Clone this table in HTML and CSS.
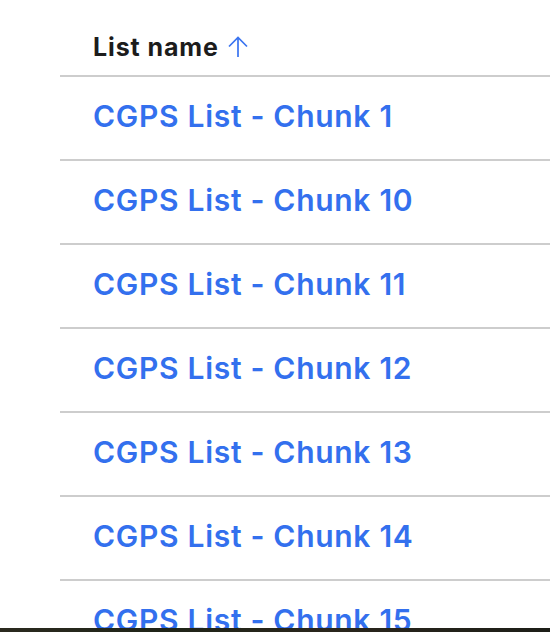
FILE: index.html
```html
<!DOCTYPE html>
<html>
<head>
<meta charset="utf-8">
<link rel="stylesheet" href="styles.css">
</head>
<body>
<div class="list">
  <div class="head">
    <span class="head-label">List name</span>
    <svg class="sort" width="20" height="22" viewBox="0 0 20 22"><path d="M10 1.5V21M1 10.5l9-9 9 9" fill="none" stroke="#3a74f0" stroke-width="1.7"/></svg>
  </div>
  <div class="row"><a class="name">CGPS List - Chunk 1</a></div>
  <div class="row"><a class="name">CGPS List - Chunk 10</a></div>
  <div class="row"><a class="name">CGPS List - Chunk 11</a></div>
  <div class="row"><a class="name">CGPS List - Chunk 12</a></div>
  <div class="row"><a class="name">CGPS List - Chunk 13</a></div>
  <div class="row"><a class="name">CGPS List - Chunk 14</a></div>
  <div class="row"><a class="name">CGPS List - Chunk 15</a></div>
</div>
<div class="desk"></div>
</body>
</html>
```
FILE: styles.css
```css
html, body { margin: 0; padding: 0; background: #fff; overflow: hidden; height: 632px; }
body { font-family: Inter, "Noto Sans", sans-serif; }
.list { margin-left: 60px; }
.head {
  height: 77px;
  border-bottom: 2px solid #cdcdcd;
  display: flex;
  align-items: center;
  gap: 9px;
  padding-left: 33px;
  padding-top: 19px;
  box-sizing: border-box;
}
.head-label { font-size: 25px; font-weight: 700; color: #1c1c1c; letter-spacing: 0.9px; }
.sort { display: block; }
.row {
  height: 84px;
  box-sizing: border-box;
  border-bottom: 2px solid #cdcdcd;
  display: flex;
  align-items: center;
  padding-left: 33px;
  padding-bottom: 4px;
}
.name { font-size: 30px; font-weight: 600; color: #3370ee; letter-spacing: 0.7px; }
.desk {
  position: fixed; left: 0; right: 0; bottom: 0; height: 4px;
  background: linear-gradient(90deg, #2b2a1f, #1f2418 30%, #2a261c 60%, #1d1e18);
}
```
